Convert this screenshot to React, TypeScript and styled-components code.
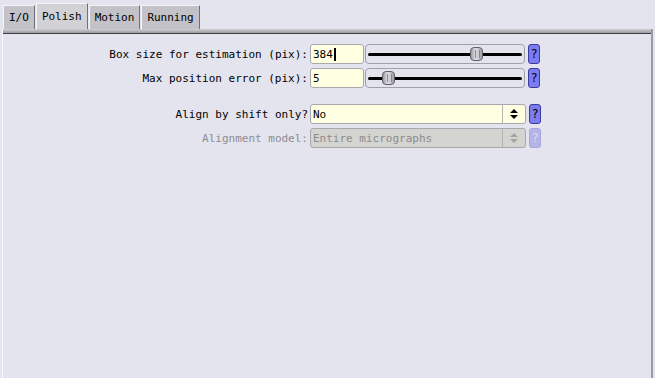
import styled, { createGlobalStyle } from 'styled-components';

const GlobalStyle = createGlobalStyle`
  html, body {
    margin: 0;
    padding: 0;
    background: #e4e4ee;
  }
  body {
    font-family: "DejaVu Sans Mono", "Liberation Mono", monospace;
    font-size: 11px;
    color: #000;
  }
`;

const Window = styled.div`
  width: 655px;
  height: 378px;
  display: flex;
  flex-direction: column;
  background: #e4e4ee;
  overflow: hidden;
`;

const TabBar = styled.div`
  display: flex;
  align-items: flex-end;
  height: 29px;
  padding-left: 3px;
  gap: 1px;
`;

const Tab = styled.div<{ $active?: boolean }>`
  height: ${(p) => (p.$active ? 26 : 24)}px;
  padding: 0 5px;
  display: flex;
  align-items: center;
  box-sizing: border-box;
  background: ${(p) => (p.$active ? '#d2d2d6' : '#c2c2c8')};
  border-top: 1px solid #f4f4f8;
  border-left: 1px solid #f4f4f8;
  border-right: 1px solid #707078;
  color: #000;
`;

const Panel = styled.div`
  flex: 1;
  margin: 0 2px 0 2px;
  border-left: 1px solid #f8f8fc;
  border-right: 2px solid #9a9aa2;
  display: flex;
  flex-direction: column;
`;

const PanelBand = styled.div`
  height: 4px;
  background: linear-gradient(#d0d0d4, #9c9ca0);
  border-bottom: 1px solid #404044;
`;

const Form = styled.div`
  display: flex;
  flex-direction: column;
  padding-top: 10px;
  gap: 4px;
`;

const Row = styled.div<{ $gapTop?: number }>`
  display: flex;
  align-items: center;
  height: 20px;
  margin-top: ${(p) => p.$gapTop ?? 0}px;
`;

const Label = styled.div<{ $disabled?: boolean }>`
  width: 305px;
  padding-right: 2px;
  text-align: right;
  white-space: nowrap;
  color: ${(p) => (p.$disabled ? '#8c8c94' : '#000')};
`;

const TextInput = styled.div`
  width: 54px;
  height: 20px;
  box-sizing: border-box;
  background: #ffffe2;
  border: 1px solid #a8a8ae;
  border-radius: 3px;
  padding-left: 2px;
  display: flex;
  align-items: center;
`;

const Caret = styled.span`
  display: inline-block;
  width: 2px;
  height: 13px;
  background: #000;
  margin-left: 1px;
`;

const SliderBox = styled.div`
  width: 160px;
  height: 20px;
  margin-left: 1px;
  box-sizing: border-box;
  border: 1px solid #a0a0a8;
  border-radius: 4px;
  position: relative;
  display: flex;
  align-items: center;
  padding: 0 2px;
`;

const Track = styled.div`
  flex: 1;
  height: 3px;
  background: #000;
  border-radius: 2px;
`;

const Thumb = styled.div`
  position: absolute;
  top: 2px;
  width: 13px;
  height: 14px;
  box-sizing: border-box;
  border: 1px solid #606068;
  border-radius: 4px;
  background: linear-gradient(90deg, #9a9aa0 0%, #d8d8dc 35%, #d8d8dc 55%, #9a9aa0 100%);
  &::after {
    content: '';
    position: absolute;
    left: 4px;
    top: 2px;
    width: 3px;
    height: 8px;
    border-left: 1px solid #8a8a90;
    border-right: 1px solid #8a8a90;
  }
`;

const Help = styled.div<{ $disabled?: boolean }>`
  width: 12px;
  height: 20px;
  margin-left: 3px;
  box-sizing: border-box;
  border: 1px solid ${(p) => (p.$disabled ? '#a8a8d8' : '#3a3aa0')};
  border-radius: 3px;
  background: ${(p) => (p.$disabled ? '#b4b4e8' : '#7c7cf0')};
  color: ${(p) => (p.$disabled ? '#d8d8f0' : '#000')};
  display: flex;
  align-items: center;
  justify-content: center;
  font-size: 12px;
`;

const Select = styled.div<{ $disabled?: boolean }>`
  width: 216px;
  height: 20px;
  box-sizing: border-box;
  border: 1px solid #a8a8ae;
  border-radius: 3px;
  background: ${(p) => (p.$disabled ? '#d4d4d0' : '#ffffe2')};
  color: ${(p) => (p.$disabled ? '#8c8c90' : '#000')};
  display: flex;
  align-items: center;
`;

const SelectText = styled.div`
  flex: 1;
  padding-left: 2px;
`;

const Arrows = styled.div<{ $disabled?: boolean }>`
  width: 22px;
  height: 100%;
  border-left: 1px solid #b4b4b4;
  display: flex;
  align-items: center;
  justify-content: center;
`;

const SpinIcon = ({ color }: { color: string }) => (
  <svg width="8" height="10" viewBox="0 0 8 10">
    <polygon points="0,4 8,4 4,0" fill={color} />
    <polygon points="0,6 8,6 4,10" fill={color} />
  </svg>
);

const SliderField = ({ pos }: { pos: number }) => (
  <SliderBox>
    <Track />
    <Thumb style={{ left: pos }} />
  </SliderBox>
);

const App = () => {
  return (
    <>
      <GlobalStyle />
      <Window>
        <TabBar>
          <Tab>I/O</Tab>
          <Tab $active>Polish</Tab>
          <Tab>Motion</Tab>
          <Tab>Running</Tab>
        </TabBar>
        <Panel>
          <PanelBand />
          <Form>
            <Row>
              <Label>Box size for estimation (pix):</Label>
              <TextInput>384<Caret /></TextInput>
              <SliderField pos={104} />
              <Help>?</Help>
            </Row>
            <Row>
              <Label>Max position error (pix):</Label>
              <TextInput>5</TextInput>
              <SliderField pos={16} />
              <Help>?</Help>
            </Row>
            <Row $gapTop={12}>
              <Label>Align by shift only?</Label>
              <Select>
                <SelectText>No</SelectText>
                <Arrows><SpinIcon color="#000" /></Arrows>
              </Select>
              <Help>?</Help>
            </Row>
            <Row>
              <Label $disabled>Alignment model:</Label>
              <Select $disabled>
                <SelectText>Entire micrographs</SelectText>
                <Arrows $disabled><SpinIcon color="#a4a4a4" /></Arrows>
              </Select>
              <Help $disabled>?</Help>
            </Row>
          </Form>
        </Panel>
      </Window>
    </>
  );
};

export default App;
